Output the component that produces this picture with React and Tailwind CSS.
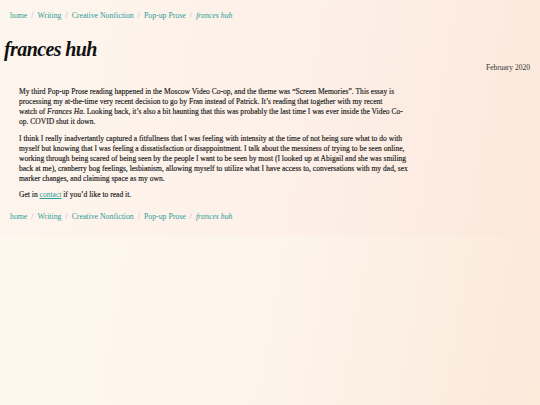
export default function App() {
  const Crumbs = () => (
    <nav className="flex items-center text-[7.8px] leading-[10px] text-[#2b9c98]">
      <span>home</span>
      <span className="mx-[4px] text-[#aaa]">/</span>
      <span>Writing</span>
      <span className="mx-[4px] text-[#aaa]">/</span>
      <span>Creative Nonfiction</span>
      <span className="mx-[4px] text-[#aaa]">/</span>
      <span>Pop-up Prose</span>
      <span className="mx-[4px] text-[#aaa]">/</span>
      <span className="italic">frances huh</span>
    </nav>
  );
  return (
    <div
      className="min-h-[405px] w-[540px] bg-[linear-gradient(100deg,#fef8ef_0%,#fdf5ec_50%,#fbe9da_100%)] text-[#222]"
      style={{ fontFamily: '"Liberation Serif", "Times New Roman", serif' }}
    >
      <div className="bg-[linear-gradient(100deg,#fdf6ee_0%,#fdf0e8_55%,#fce8dc_100%)] pt-[11px] pb-[13px]">
        <div className="pl-[10px]">
          <Crumbs />
        </div>
        <h1 className="mt-[15px] pl-[4px] text-[20px] leading-[26px] font-bold italic tracking-[-0.6px] text-[#111]">
          frances huh
        </h1>
        <div className="mt-[1px] pr-[10px] text-right text-[7.5px] leading-[10px] text-[#333]">
          February 2020
        </div>
        <div className="mt-[14px] pl-[19px] w-[412px] text-[7.55px] leading-[10px] text-[#1a1a1a] [-webkit-text-stroke:0.15px_#1a1a1a]">
          <p>
            My third Pop-up Prose reading happened in the Moscow Video Co-op, and the theme was “Screen Memories”. This essay is<br />
            processing my at-the-time very recent decision to go by Fran instead of Patrick. It’s reading that together with my recent<br />
            watch of <i>Frances Ha</i>. Looking back, it’s also a bit haunting that this was probably the last time I was ever inside the Video Co-<br />
            op. COVID shut it down.
          </p>
          <p className="mt-[7px]">
            I think I really inadvertantly captured a fitfullness that I was feeling with intensity at the time of not being sure what to do with<br />
            myself but knowing that I was feeling a dissatisfaction or disappointment. I talk about the messiness of trying to be seen online,<br />
            working through being scared of being seen by the people I want to be seen by most (I looked up at Abigail and she was smiling<br />
            back at me), cranberry bog feelings, lesbianism, allowing myself to utilize what I have access to, conversations with my dad, sex<br />
            marker changes, and claiming space as my own.
          </p>
          <p className="mt-[6px]">
            Get in <span className="text-[#2b9c98] underline [-webkit-text-stroke:0]">contact</span> if you’d like to read it.
          </p>
        </div>
        <div className="mt-[12px] pl-[10px]">
          <Crumbs />
        </div>
      </div>
    </div>
  );
}
